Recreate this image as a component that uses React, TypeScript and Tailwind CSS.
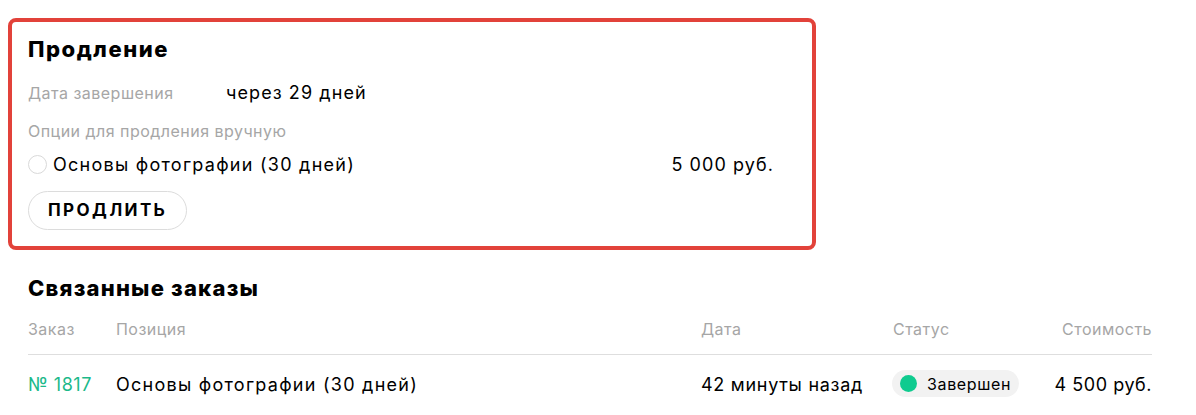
export default function App() {
  return (
    <div className="min-h-screen bg-white text-black font-['Inter',sans-serif]">
      <div className="pt-[18px] pl-2 pr-[380px]">
        <div className="w-[808px] rounded-lg border-4 border-[#e2423a] px-4 pt-[13px] pb-[16px]">
          <h2 className="text-[22px] font-extrabold leading-[28px] tracking-[0.07em]">Продление</h2>
          <div className="mt-[16px] flex items-center">
            <span className="w-[198px] text-[16px] tracking-[0.03em] text-[#a6a6a6]">Дата завершения</span>
            <span className="text-[18px] tracking-[0.06em]">через 29 дней</span>
          </div>
          <div className="mt-[13px] text-[16px] tracking-[0.03em] text-[#a6a6a6]">Опции для продления вручную</div>
          <div className="mt-[8px] flex items-center justify-between pr-[22px]">
            <label className="flex items-center gap-[6px]">
              <span className="h-[19px] w-[19px] rounded-full border border-[#d9d9d9]" />
              <span className="text-[18px] tracking-[0.07em]">Основы фотографии (30 дней)</span>
            </label>
            <span className="text-[18px] tracking-[0.06em]">5 000 руб.</span>
          </div>
          <button className="mt-[13px] h-[39px] rounded-full border border-[#dcdcdc] px-[19px] text-[17px] font-bold tracking-[0.14em]">
            ПРОДЛИТЬ
          </button>
        </div>
      </div>

      <div className="pl-7 pr-11 pt-[24px]">
        <h2 className="text-[22px] font-extrabold leading-[28px] tracking-[0.055em]">Связанные заказы</h2>
        <div className="mt-[15px] grid grid-cols-[88px_585px_192px_1fr_auto] border-b border-[#dedede] pb-[13px] text-[16px] tracking-[0.03em] text-[#a6a6a6]">
          <span>Заказ</span>
          <span>Позиция</span>
          <span>Дата</span>
          <span>Статус</span>
          <span className="text-right">Стоимость</span>
        </div>
        <div className="mt-[15px] grid grid-cols-[88px_585px_192px_1fr_auto] items-center text-[18px] tracking-[0.06em]">
          <span className="tracking-[0.03em] text-[#1cb98a]">№ 1817</span>
          <span className="tracking-[0.07em]">Основы фотографии (30 дней)</span>
          <span className="tracking-[0.04em]">42 минуты назад</span>
          <span>
            <span className="-ml-px inline-flex h-[27px] items-center gap-[10px] rounded-full bg-[#f2f2f2] pl-[8px] pr-[8px] text-[16px] tracking-[0.04em]">
              <span className="h-[17px] w-[17px] rounded-full bg-[#0fcb8f]" />
              Завершен
            </span>
          </span>
          <span className="text-right tracking-[0.03em]">4 500 руб.</span>
        </div>
      </div>
    </div>
  );
}
